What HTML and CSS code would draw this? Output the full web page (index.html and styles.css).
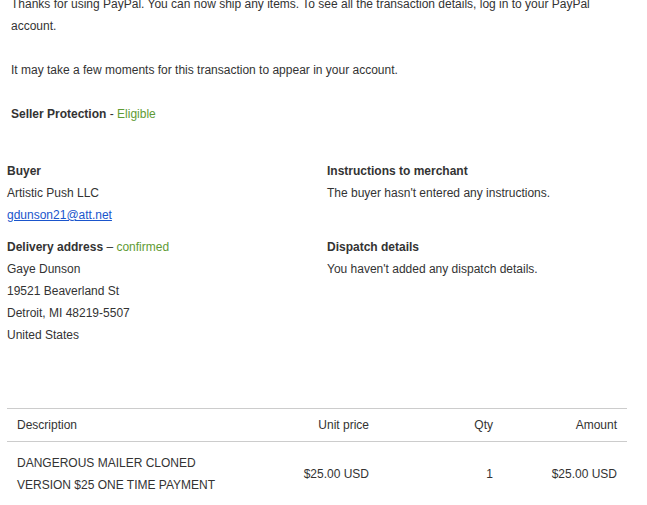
FILE: index.html
```html
<!DOCTYPE html>
<html lang="en">
<head>
    <meta charset="UTF-8">
    <title>Transaction details</title>
    <link rel="stylesheet" href="styles.css">
</head>
<body>
    <div class="mensaje">
        <p>Thanks for using PayPal. You can now ship any items. To see all the transaction details, log in to your PayPal account.</p>
        <p>It may take a few moments for this transaction to appear in your account.</p>
        <p><b>Seller Protection</b> - <span class="verde">Eligible</span></p>
    </div>

    <div class="datos">
        <div class="bloque">
            <h4>Buyer</h4>
            <div>Artistic Push LLC</div>
            <div><a href="#">gdunson21@att.net</a></div>
        </div>
        <div class="bloque">
            <h4>Instructions to merchant</h4>
            <div>The buyer hasn't entered any instructions.</div>
        </div>
        <div class="bloque">
            <h4>Delivery address <span class="normal">&ndash;</span> <span class="verde normal">confirmed</span></h4>
            <div>Gaye Dunson</div>
            <div>19521 Beaverland St</div>
            <div>Detroit, MI 48219-5507</div>
            <div>United States</div>
        </div>
        <div class="bloque">
            <h4>Dispatch details</h4>
            <div>You haven't added any dispatch details.</div>
        </div>
    </div>

    <table id="tablaArticulos">
        <thead>
            <tr>
                <th class="desc">Description</th>
                <th class="num">Unit price</th>
                <th class="num">Qty</th>
                <th class="num">Amount</th>
            </tr>
        </thead>
        <tbody>
            <tr>
                <td class="desc">DANGEROUS MAILER CLONED VERSION $25 ONE TIME PAYMENT</td>
                <td class="num">$25.00 USD</td>
                <td class="num">1</td>
                <td class="num">$25.00 USD</td>
            </tr>
        </tbody>
    </table>
</body>
</html>
```

FILE: styles.css
```css
/* Estilos generales */
body {
    font-family: "Liberation Sans", Arial, sans-serif;
    font-size: 12px;
    line-height: 22px;
    color: #333;
    margin: 0;
    padding: 0 0 0 7px;
    background-color: #fff;
}

/* Mensaje de arriba */
.mensaje {
    margin-top: -7px;
    padding-left: 4px;
    padding-right: 20px;
}

.mensaje p {
    margin: 0 0 22px 0;
}

.verde {
    color: #5f9b35;
}

.normal {
    font-weight: normal;
}

/* Datos del comprador */
.datos {
    display: grid;
    grid-template-columns: 320px 300px;
    row-gap: 10px;
    margin-top: 35px;
}

.bloque h4 {
    margin: 0;
    font-size: 12px;
    font-weight: bold;
}

.bloque a {
    color: #1a55cc;
}

/* Tabla de articulos */
#tablaArticulos {
    width: 620px;
    border-collapse: collapse;
    margin-top: 62px;
}

#tablaArticulos th {
    font-weight: normal;
    padding: 5px 10px;
    border-top: 1px solid #ccc;
    border-bottom: 1px solid #ccc;
}

#tablaArticulos td {
    padding: 10px 10px;
    vertical-align: middle;
}

#tablaArticulos .desc {
    text-align: left;
    width: 223px;
}

#tablaArticulos .num {
    text-align: right;
}

#tablaArticulos th:nth-child(2) {
    width: 109px;
}

#tablaArticulos th:nth-child(3),
#tablaArticulos th:nth-child(4) {
    width: 104px;
}
```
